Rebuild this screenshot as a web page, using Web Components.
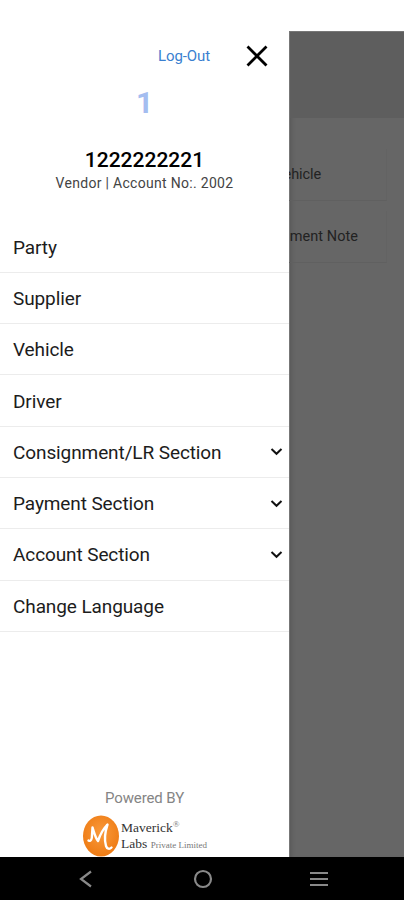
<!DOCTYPE html>
<html lang="en">
<head>
<meta charset="utf-8">
<meta name="viewport" content="width=device-width, initial-scale=1">
<title>Menu</title>
<style>
html, body {
  margin: 0;
  height: 100%;
  overflow: hidden;
  background: #fff;
  font-family: Roboto, "Liberation Sans", sans-serif;
}
</style>
</head>
<body>
<app-screen>
  <dimmed-page slot="page">
    <page-card>ehicle</page-card>
    <page-card wide>ment Note</page-card>
  </dimmed-page>
  <side-drawer slot="drawer">
    <user-header slot="header" initial="1" name="1222222221">Vendor | Account No:. 2002</user-header>
    <menu-item>Party</menu-item>
    <menu-item>Supplier</menu-item>
    <menu-item>Vehicle</menu-item>
    <menu-item>Driver</menu-item>
    <menu-item expandable>Consignment/LR Section</menu-item>
    <menu-item expandable>Payment Section</menu-item>
    <menu-item expandable>Account Section</menu-item>
    <menu-item>Change Language</menu-item>
    <powered-by slot="footer">Powered BY</powered-by>
  </side-drawer>
  <system-nav slot="nav"></system-nav>
</app-screen>

<script>
function define(name, html) {
	const template = document.createElement("template");
	template.innerHTML = html;

	customElements.define(name, class extends HTMLElement {
		constructor() {
			super();
			this.attachShadow({ mode: "open" }).appendChild(template.content.cloneNode(true));
		}

		connectedCallback() {
			// copy attributes into the elements that ask for them
			this.shadowRoot.querySelectorAll("[data-attr]").forEach((el) => {
				el.textContent = this.getAttribute(el.dataset.attr);
			});
		}
	});
}

define("app-screen", `<style>
:host {
  display: grid;
  grid-template-columns: 289px 1fr;
  grid-template-rows: 31px 826px 43px;
  width: 404px;
  height: 900px;
}
.drawer { grid-area: 1 / 1 / 3 / 2; display: grid; }
.page { grid-area: 2 / 2; display: grid; }
.nav { grid-area: 3 / 1 / 4 / 3; display: grid; }
</style>
<div class="page"><slot name="page"></slot></div>
<div class="drawer"><slot name="drawer"></slot></div>
<div class="nav"><slot name="nav"></slot></div>`);

define("dimmed-page", `<style>
:host {
  display: block;
  overflow: hidden;
  background: #666;
  box-shadow: inset 1px 1px 0 #777, inset 5px 0 4px -3px #555;
}
.bar { height: 87px; background: #5e5e5e; box-shadow: inset 1px 1px 0 #777; }
.cards { display: flex; flex-direction: column; padding-top: 31px; }
</style>
<div class="bar"></div>
<div class="cards"><slot></slot></div>`);

define("page-card", `<style>
:host {
  display: flex;
  justify-content: flex-end;
  align-items: center;
  box-sizing: border-box;
  height: 52px;
  width: 98px;
  margin-bottom: 10px;
  padding-right: 65px;
  border-right: 1px solid #636363;
  border-bottom: 1px solid #606060;
  font-size: 14.5px;
  letter-spacing: -.1px;
  color: #222;
  white-space: nowrap;
}
:host([wide]) { padding-right: 28px; letter-spacing: .05px; }
</style>
<slot></slot>`);

define("side-drawer", `<style>
:host { display: flex; flex-direction: column; background: #fff; }
nav { flex: 1; }
</style>
<slot name="header"></slot>
<nav><slot></slot></nav>
<slot name="footer"></slot>`);

define("user-header", `<style>
:host {
  display: flex;
  flex-direction: column;
  align-items: center;
  height: 221.5px;
  width: 289px;
}
.top {
  display: flex;
  justify-content: flex-end;
  align-items: center;
  gap: 36px;
  align-self: stretch;
  height: 50px;
  padding: 31px 21px 0 0;
}
a { color: #3a7fd0; font-size: 15px; letter-spacing: -.1px; }
svg { display: block; }
.initial { color: #a4bdf0; font-size: 30px; font-weight: 700; line-height: 44px; }
.name { color: #000; font-size: 21px; font-weight: 500; line-height: 26px; margin-top: 22px; }
.info { color: #444; font-size: 14px; letter-spacing: .3px; line-height: 21px; }
</style>
<div class="top">
  <a>Log-Out</a>
  <svg width="22" height="22" viewBox="0 0 22 22"><path d="M1.5 1.5 20.5 20.5M20.5 1.5 1.5 20.5" stroke="#000" stroke-width="2.8"/></svg>
</div>
<div class="initial" data-attr="initial"></div>
<div class="name" data-attr="name"></div>
<div class="info"><slot></slot></div>`);

define("menu-item", `<style>
:host {
  display: flex;
  align-items: center;
  justify-content: space-between;
  box-sizing: border-box;
  height: 51.3px;
  padding: 1px 6px 0 13px;
  border-bottom: 1.5px solid #ececec;
  font-size: 19px;
  letter-spacing: -.1px;
  color: #1c1c1c;
}
svg { display: none; }
:host([expandable]) svg { display: block; }
</style>
<slot></slot>
<svg width="13" height="10" viewBox="0 0 13 10"><path d="M1.5 2 6.5 6.8 11.5 2" fill="none" stroke="#111" stroke-width="2"/></svg>`);

define("powered-by", `<style>
:host {
  display: flex;
  flex-direction: column;
  align-items: center;
  height: 69px;
  color: #858585;
  font-size: 15px;
}
.label { line-height: 21px; letter-spacing: -.1px; }
.logo { display: flex; align-items: flex-start; margin-top: 6px; gap: 1px; }
.words {
  padding-top: 5px;
  font-family: "Liberation Serif", serif;
  font-size: 13.5px;
  line-height: 16px;
  color: #333;
  white-space: nowrap;
}
sup { font-size: 9px; line-height: 0; vertical-align: 5px; color: #777; }
small { font-size: 9px; color: #777; }
</style>
<div class="label"><slot></slot></div>
<div class="logo">
  <svg width="38" height="42" viewBox="0 0 38 42">
    <defs><radialGradient id="g" cx=".5" cy=".42" r=".6"><stop offset="0" stop-color="#f99a3c"/><stop offset="1" stop-color="#ee7a12"/></radialGradient></defs>
    <ellipse cx="19" cy="21" rx="18" ry="20.5" fill="url(#g)"/>
    <path d="M6.5 25.5C9 27 10 24 10 20L10.5 12.5C12 17 13.5 23 16 26C18 20 21 14 25.5 9.5C23 17 22.5 26 24 31C25 34 27.5 34.5 29.5 32.5" fill="none" stroke="#fff" stroke-width="2.4" stroke-linecap="round" stroke-linejoin="round"/>
  </svg>
  <div class="words">
    <div>Maverick<sup>®</sup></div>
    <div>Labs <small>Private Limited</small></div>
  </div>
</div>`);

define("system-nav", `<style>
:host {
  display: flex;
  justify-content: space-between;
  align-items: center;
  background: #000;
  padding: 1px 76px 0 79px;
}
svg { display: block; fill: none; stroke: #898989; stroke-width: 2.2; }
.home { margin-left: 3px; }
</style>
<svg width="13" height="18" viewBox="0 0 13 18"><path d="M12 1.5 2 9 12 16.5"/></svg>
<svg class="home" width="20" height="20" viewBox="0 0 20 20"><circle cx="10" cy="10" r="8"/></svg>
<svg width="18" height="16" viewBox="0 0 18 16"><path d="M0 2H18M0 8H18M0 14H18"/></svg>`);
</script>
</body>
</html>
